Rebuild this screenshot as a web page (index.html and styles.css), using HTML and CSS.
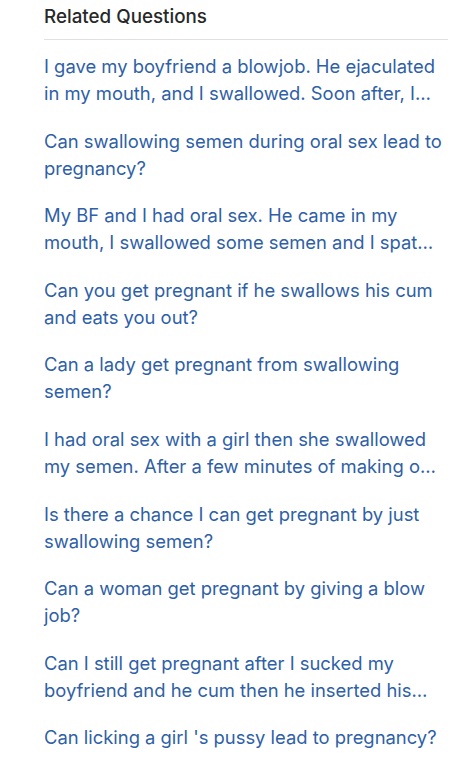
FILE: index.html
```html
<!DOCTYPE html>
<html>
<head>
<meta charset="utf-8">
<link rel="stylesheet" href="styles.css">
</head>
<body>
<div class="panel">
  <h2 class="title">Related Questions</h2>
  <ul class="list">
    <li><a class="q" href="#">I gave my boyfriend a blowjob. He ejaculated in my mouth, and I swallowed. Soon after, I…</a></li>
    <li><a class="q" href="#">Can swallowing semen during oral sex lead to pregnancy?</a></li>
    <li><a class="q" href="#">My BF and I had oral sex. He came in my mouth, I swallowed some semen and I spat…</a></li>
    <li><a class="q" href="#">Can you get pregnant if he swallows his cum and eats you out?</a></li>
    <li><a class="q" href="#">Can a lady get pregnant from swallowing semen?</a></li>
    <li><a class="q" href="#">I had oral sex with a girl then she swallowed my semen. After a few minutes of making o…</a></li>
    <li><a class="q" href="#">Is there a chance I can get pregnant by just swallowing semen?</a></li>
    <li><a class="q" href="#">Can a woman get pregnant by giving a blow job?</a></li>
    <li><a class="q" href="#">Can I still get pregnant after I sucked my boyfriend and he cum then he inserted his…</a></li>
    <li><a class="q" href="#">Can licking a girl 's pussy lead to pregnancy?</a></li>
  </ul>
</div>
</body>
</html>
```

FILE: styles.css
```css
html, body {
  margin: 0;
  padding: 0;
  background: #ffffff;
}
body {
  font-family: Inter, "Liberation Sans", sans-serif;
}
.panel {
  width: 404px;
  padding-left: 44px;
}
.title {
  margin: 0;
  padding-top: 5px;
  padding-bottom: 11px;
  font-size: 18.8px;
  line-height: 23px;
  font-weight: 500;
  color: #282829;
  border-bottom: 1px solid #dee0e1;
}
.list {
  list-style: none;
  margin: 0;
  padding: 13px 0 0;
  display: flex;
  flex-direction: column;
  gap: 20.6px;
}
.q {
  display: block;
  font-size: 18.4px;
  line-height: 27px;
  color: #2f5fa7;
  text-decoration: none;
}
```
